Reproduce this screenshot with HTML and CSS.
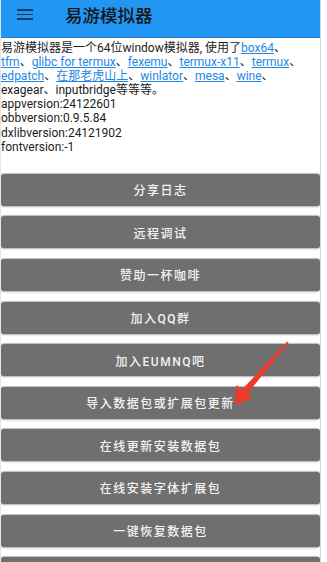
FILE: index.html
```html
<!DOCTYPE html>
<html lang="zh-CN">
<head>
<meta charset="utf-8">
<title>易游模拟器</title>
<link rel="stylesheet" href="styles.css">
</head>
<body>
<div class="app">
  <header class="appbar">
    <span class="menu" aria-label="menu"><i></i><i></i><i></i></span>
    <span class="title">易游模拟器</span>
  </header>
  <main class="content">
    <div class="info">
      <p>易游模拟器是一个64位window模拟器, 使用了<a href="#">box64</a>、<a href="#">tfm</a>、<a href="#">glibc for termux</a>、<a href="#">fexemu</a>、<a href="#">termux-x11</a>、<a href="#">termux</a>、<a href="#">edpatch</a>、<a href="#">在那老虎山上</a>、<a href="#">winlator</a>、<a href="#">mesa</a>、<a href="#">wine</a>、exagear、inputbridge等等等。</p>
      <p>appversion:24122601</p>
      <p>obbversion:0.9.5.84</p>
      <p>dxlibversion:24121902</p>
      <p>fontversion:-1</p>
    </div>
    <div class="buttons">
      <button class="btn">分享日志</button>
      <button class="btn">远程调试</button>
      <button class="btn">赞助一杯咖啡</button>
      <button class="btn">加入QQ群</button>
      <button class="btn">加入EUMNQ吧</button>
      <button class="btn">导入数据包或扩展包更新</button>
      <button class="btn">在线更新安装数据包</button>
      <button class="btn">在线安装字体扩展包</button>
      <button class="btn">一键恢复数据包</button>
      <button class="btn">一键清除数据</button>
    </div>
  </main>
  <svg class="arrow" width="327" height="562" viewBox="0 0 327 562" aria-hidden="true">
    <polygon points="235,405 236.5,385 242,389.5 287.3,341.4 288.7,342.4 247.5,393.5 252.5,398" fill="#ee3b2a"/>
  </svg>
</div>
</body>
</html>
```
FILE: styles.css
```css
html, body {
  margin: 0;
  padding: 0;
  background: #ffffff;
  height: 100%;
  overflow: hidden;
}

.app {
  position: relative;
  width: 321px;
  height: 562px;
  border-right: 1px solid #dcdcdc;
  border-left: 1px solid #e6e6e6;
  box-sizing: border-box;
  font-family: Roboto, "Noto Sans CJK SC", sans-serif;
  overflow: hidden;
}

.appbar {
  height: 38px;
  background: #2196f3;
  border-bottom: 1px solid #1d86db;
  display: flex;
  align-items: flex-start;
  box-sizing: border-box;
}

.menu {
  display: flex;
  flex-direction: column;
  gap: 3px;
  width: 16px;
  margin: 9px 0 0 16px;
}

.menu i {
  display: block;
  height: 1.6px;
  background: #173a5e;
}

.title {
  margin: 5px 0 0 32px;
  font-size: 17.5px;
  line-height: 20px;
  color: #151515;
  font-weight: 500;
  font-family: "Noto Sans CJK SC", sans-serif;
}

.content {
  padding-top: 3px;
}

.info {
  font-size: 12px;
  line-height: 14.1px;
  color: #1c1c1c;
  padding-right: 8px;
}

.info p {
  margin: 0;
}

.info a {
  color: #1e88e5;
  text-decoration: underline;
}

.buttons {
  display: flex;
  flex-direction: column;
  gap: 10.6px;
  margin-top: 20px;
}

.btn {
  display: block;
  height: 32px;
  margin: 0;
  border: none;
  border-radius: 3px;
  background: #6f6f6f;
  color: #f3f3f3;
  font-family: Roboto, "Noto Sans CJK SC", sans-serif;
  font-size: 12px;
  font-weight: 500;
  letter-spacing: 1.5px;
  box-shadow: 0 -0.5px 1px rgba(0, 0, 0, 0.25), 0 1px 2px rgba(0, 0, 0, 0.3);
  padding: 0;
  text-align: center;
}

.arrow {
  position: absolute;
  left: -1px;
  top: 0;
  pointer-events: none;
}
```
